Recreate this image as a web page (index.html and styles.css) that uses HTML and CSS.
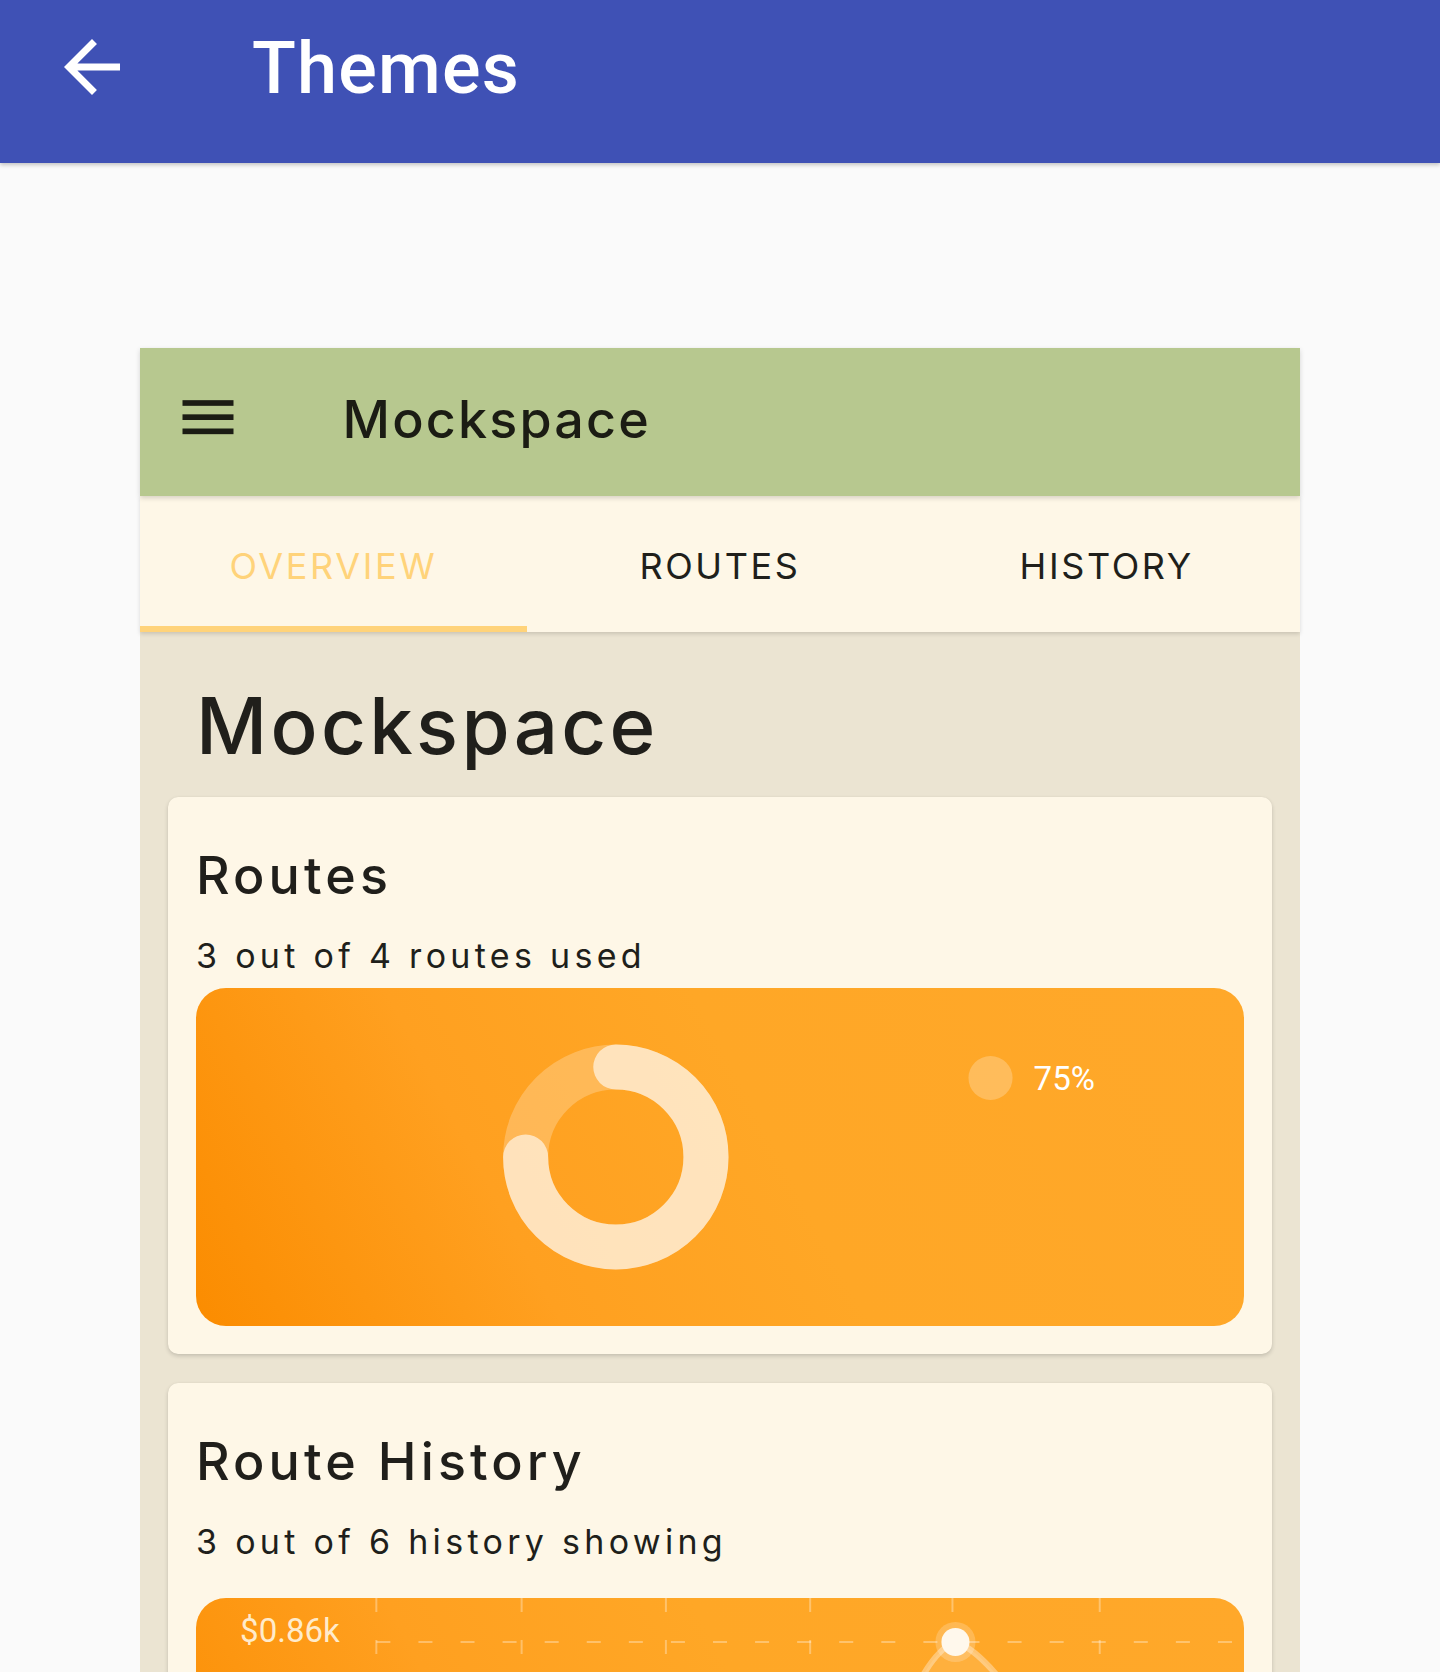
FILE: index.html
```html
<!DOCTYPE html>
<html lang="en">
<head>
<meta charset="utf-8">
<title>Themes</title>
<link rel="stylesheet" href="styles.css">
</head>
<body>
<header class="appbar">
  <svg class="back-icon" viewBox="0 0 24 24" aria-hidden="true"><path d="M20 11H7.83l5.59-5.59L12 4l-8 8 8 8 1.41-1.41L7.83 13H20v-2z"/></svg>
  <h1 class="appbar-title">Themes</h1>
</header>
<main class="stage">
  <section class="device">
    <div class="mock-toolbar">
      <svg class="menu-icon" viewBox="0 0 24 24" aria-hidden="true"><rect x="3" y="5" width="18" height="2"/><rect x="3" y="10" width="18" height="2"/><rect x="3" y="15" width="18" height="2"/></svg>
      <span class="mock-title">Mockspace</span>
    </div>
    <nav class="tabs">
      <div class="tab tab-active">OVERVIEW</div>
      <div class="tab">ROUTES</div>
      <div class="tab">HISTORY</div>
    </nav>
    <div class="content">
      <h2 class="headline">Mockspace</h2>
      <article class="card">
        <h3 class="card-title">Routes</h3>
        <p class="card-sub">3 out of 4 routes used</p>
        <div class="chart">
          <svg class="chart-svg" viewBox="0 0 1046 338" preserveAspectRatio="none">
            <circle cx="419" cy="169" r="90" fill="none" stroke="rgba(255,255,255,0.24)" stroke-width="45"/>
            <path d="M419 79 A90 90 0 1 1 329 169" fill="none" stroke="rgba(255,255,255,0.6)" stroke-width="45" stroke-linecap="round"/>
            <circle cx="793" cy="90" r="22" fill="rgba(255,255,255,0.24)"/>
            <text x="836" y="102" class="chart-label">75%</text>
          </svg>
        </div>
      </article>
      <article class="card">
        <h3 class="card-title">Route History</h3>
        <p class="card-sub">3 out of 6 history showing</p>
        <div class="chart chart-line">
          <svg class="chart-svg" viewBox="0 0 1046 338" preserveAspectRatio="none">
            <g stroke="rgba(255,255,255,0.32)" stroke-width="2" stroke-dasharray="14 28">
              <line x1="180" y1="0" x2="180" y2="338"/>
              <line x1="325" y1="0" x2="325" y2="338"/>
              <line x1="469" y1="0" x2="469" y2="338"/>
              <line x1="613" y1="0" x2="613" y2="338"/>
              <line x1="755" y1="0" x2="755" y2="338"/>
              <line x1="902" y1="0" x2="902" y2="338"/>
              <line x1="180" y1="44" x2="1046" y2="44"/>
            </g>
            <path d="M690 160 C715 90 735 52 758 44 C785 52 815 95 860 160 Z" fill="rgba(255,255,255,0.1)"/>
            <path d="M690 160 C715 90 735 52 758 44 C785 52 815 95 860 160" fill="none" stroke="rgba(255,255,255,0.35)" stroke-width="6"/>
            <circle cx="758" cy="44" r="20" fill="rgba(255,255,255,0.2)"/>
            <circle cx="758" cy="44" r="14" fill="#FFF8EC"/>
            <text x="44" y="44" class="chart-label chart-label-soft">$0.86k</text>
          </svg>
        </div>
      </article>
    </div>
  </section>
</main>
</body>
</html>
```
FILE: styles.css
```css
html, body {
  margin: 0;
  padding: 0;
}
body {
  background: #FAFAFA;
  font-family: Inter, "Open Sans", sans-serif;
  color: #201F1B;
  overflow: hidden;
}
.appbar {
  height: 163px;
  box-sizing: border-box;
  background: #3F51B5;
  display: flex;
  align-items: flex-start;
  padding: 25px 0 0 50px;
  box-shadow: 0 2px 4px rgba(0,0,0,0.22);
  position: relative;
  z-index: 2;
}
.back-icon {
  width: 84px;
  height: 84px;
  fill: #FFFFFF;
  flex: none;
}
.appbar-title {
  margin: 8px 0 0 118px;
  font-family: Roboto, "Liberation Sans", sans-serif;
  font-weight: 500;
  font-size: 72px;
  line-height: 72px;
  color: #FFFFFF;
  letter-spacing: 1.2px;
}
.stage {
  padding-top: 185px;
}
.device {
  margin-left: 140px;
  width: 1160px;
  height: 1324px;
  background: #EBE4D2;
  display: flex;
  flex-direction: column;
}
.mock-toolbar {
  height: 148px;
  box-sizing: border-box;
  background: #B7C88F;
  display: flex;
  align-items: center;
  padding: 0 0 4px 33.5px;
  position: relative;
  z-index: 2;
  box-shadow: 0 2px 5px rgba(0,0,0,0.16);
}
.menu-icon {
  width: 68px;
  height: 68px;
  fill: #1B1C14;
  flex: none;
}
.mock-title {
  margin-left: 101px;
  font-size: 52px;
  line-height: 52px;
  font-weight: 500;
  letter-spacing: 2.2px;
  color: #1B1C14;
}
.tabs {
  height: 136px;
  background: #FEF7E7;
  display: grid;
  grid-template-columns: repeat(3, 1fr);
  position: relative;
  z-index: 1;
  box-shadow: 0 2px 4px rgba(0,0,0,0.14);
}
.tab {
  display: flex;
  align-items: center;
  justify-content: center;
  box-sizing: border-box;
  padding-top: 4px;
  font-size: 36px;
  line-height: 36px;
  letter-spacing: 2.6px;
  color: #201F1B;
}
.tab-active {
  color: #FFD37A;
  box-shadow: inset 0 -6px 0 #FFD37A;
}
.content {
  flex: 1;
  padding: 0 28px;
  overflow: hidden;
}
.headline {
  margin: 54.6px 0 32.4px 28px;
  font-size: 78px;
  line-height: 78px;
  font-weight: 500;
  letter-spacing: 3.3px;
  color: #201F1B;
}
.card {
  background: #FEF7E7;
  border-radius: 10px;
  padding: 53px 28px 28px;
  margin-bottom: 29px;
  box-shadow: 0 2px 4px rgba(0,0,0,0.16), 0 0 1px rgba(0,0,0,0.08);
}
.card-title {
  margin: 0;
  font-size: 52px;
  line-height: 52px;
  font-weight: 500;
  letter-spacing: 4.1px;
  color: #201F1B;
}
.card-sub {
  margin: 36.7px 0 0;
  font-size: 34px;
  line-height: 34px;
  letter-spacing: 4.3px;
  color: #201F1B;
}
.chart {
  margin-top: 15.3px;
  height: 338px;
  border-radius: 30px;
  overflow: hidden;
  background: linear-gradient(62deg, #FB8C00 0%, #FFA020 30%, #FFA726 55%, #FFA82A 100%);
}
.chart-line {
  margin-top: 39.6px;
}
.chart-svg {
  display: block;
  width: 100%;
  height: 100%;
}
.chart-label {
  font-family: Roboto, "Liberation Sans", sans-serif;
  font-size: 33px;
  fill: #FFFFFF;
}
.chart-label-soft {
  fill: #FFEBCB;
}
```
